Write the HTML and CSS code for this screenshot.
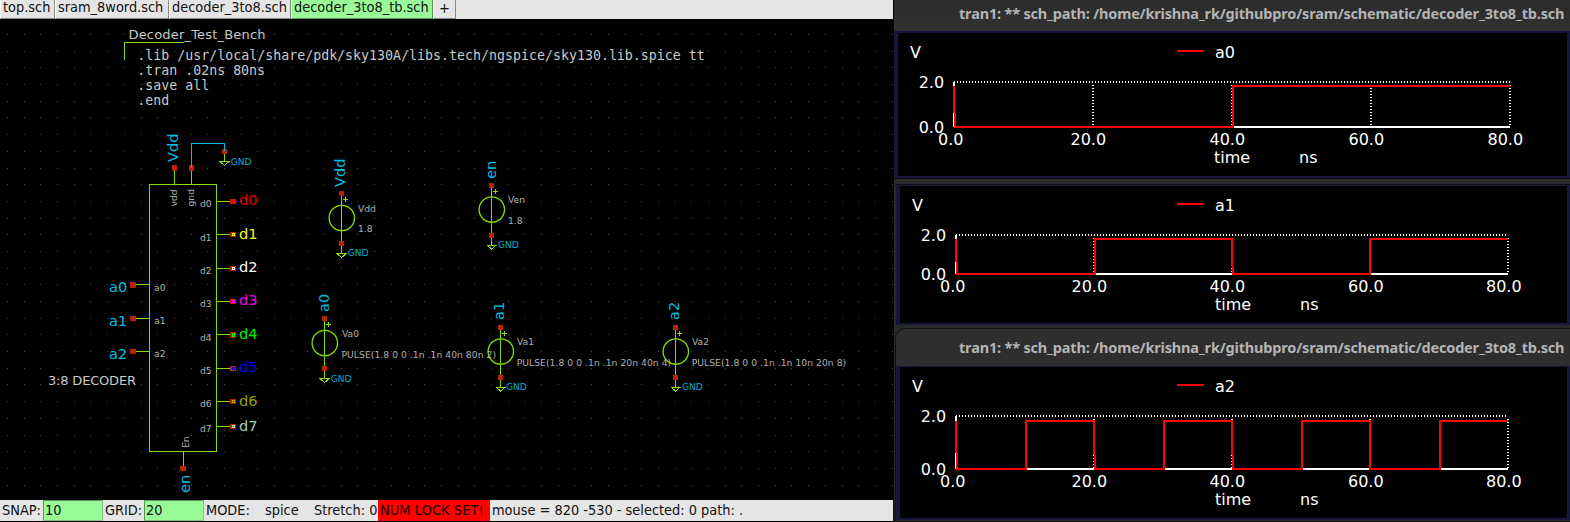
FILE: index.html
```html
<!DOCTYPE html>
<html lang="en">
<head>
<meta charset="utf-8">
<title>decoder_3to8_tb.sch</title>
<link rel="stylesheet" href="styles.css">
</head>
<body>
<div class="desktop">
  <main class="editor">
    <nav class="tabs">
      <div class="tab tab-top">top.sch</div>
      <div class="tab tab-sram">sram_8word.sch</div>
      <div class="tab tab-dec">decoder_3to8.sch</div>
      <div class="tab tab-tb active">decoder_3to8_tb.sch</div>
      <div class="tab tab-add">+</div>
    </nav>
    <svg class="schematic" viewBox="0 19 893 481">
      <defs>
        <g id="source">
          <path class="line" d="M0.5 0V61M4.5 4V9M2 6.5H7"/>
          <circle class="ring" cx="0.8" cy="25" r="12.7"/>
          <path class="line" d="M-4 60.5H5.5L0.5 64.5Z"/>
          <rect class="pin" x="-2" y="-2" width="5" height="5"/>
          <rect class="pin" x="-2" y="48" width="5" height="5"/>
        </g>
      </defs>
      <g id="grid" class="dots"></g>

      <text class="note" x="128.500" y="39" textLength="137">Decoder_Test_Bench</text>
      <path class="line" d="M124.500 60V42.500H184"/>
      <g class="code">
        <text x="137.300" y="60.400" textLength="567.500">.lib /usr/local/share/pdk/sky130A/libs.tech/ngspice/sky130.lib.spice tt</text>
        <text x="137.300" y="75.400">.tran .02ns 80ns</text>
        <text x="137.300" y="90.400">.save all</text>
        <text x="137.300" y="105.400">.end</text>
      </g>

      <!-- decoder symbol -->
      <path class="line" d="M149.500 184.500H216.500V451.500H149.500ZM174.500 168V184M191.500 168V184M183.500 452V468M133 284.500H149M133 318.500H149M133 351.500H149M216 201.500H233M216 234.500H233M216 268.500H233M216 301.500H233M216 334.500H233M216 368.500H233M216 401.500H233M216 426.500H233"/>
      <path class="line" d="M224.500 151V161M220 161.500H229L224.500 165.500Z"/>
      <g class="pin">
        <rect x="172" y="165" width="5" height="6"/><rect x="189" y="165" width="5" height="6"/>
        <rect x="222" y="149" width="5" height="5"/><rect x="180" y="466" width="6" height="5"/>
        <rect x="130" y="282" width="6" height="6"/><rect x="130" y="316" width="6" height="5"/><rect x="130" y="349" width="6" height="5"/>
        <rect x="230" y="199" width="6" height="5"/><rect x="230" y="232" width="6" height="5"/>
        <rect x="230" y="266" width="6" height="5"/><rect x="230" y="299" width="6" height="5"/>
        <rect x="230" y="332" width="6" height="6"/><rect x="230" y="366" width="6" height="5"/>
        <rect x="230" y="399" width="6" height="5"/><rect x="230" y="424" width="6" height="5"/>
      </g>
      <path class="wire" d="M191.500 168V143.500H224.500V151"/>
      <g class="probe">
        <rect class="c0" x="232.500" y="200.500" width="2" height="2"/><rect class="c1" x="232.500" y="233.500" width="2" height="2"/>
        <rect class="c2" x="232.500" y="267.500" width="2" height="2"/><rect class="c3" x="232.500" y="300.500" width="2" height="2"/>
        <rect class="c4" x="232.500" y="333.500" width="2" height="3"/><rect class="c5" x="232.500" y="367.500" width="2" height="2"/>
        <rect class="c6" x="232.500" y="400.500" width="2" height="2"/><rect class="c7" x="232.500" y="425.500" width="2" height="2"/>
      </g>
      <g class="outs">
        <text class="t0" x="239" y="205">d0</text><text class="t1" x="239" y="239">d1</text>
        <text class="t2" x="239" y="272">d2</text><text class="t3" x="239" y="305">d3</text>
        <text class="t4" x="239" y="339">d4</text><text class="t5" x="239" y="372">d5</text>
        <text class="t6" x="239" y="406">d6</text><text class="t7" x="239" y="431">d7</text>
      </g>
      <g class="net">
        <text x="109" y="291.500">a0</text><text x="109" y="326">a1</text><text x="109" y="359">a2</text>
        <text transform="translate(178.300 162) rotate(-90)">Vdd</text>
        <text transform="translate(190 493) rotate(-90)">en</text>
      </g>
      <g class="small">
        <text x="200" y="207">d0</text><text x="200" y="241">d1</text><text x="200" y="274">d2</text><text x="200" y="307">d3</text>
        <text x="200" y="340.500">d4</text><text x="200" y="374">d5</text><text x="200" y="407">d6</text><text x="200" y="432">d7</text>
        <text x="154" y="291">a0</text><text x="154" y="324">a1</text><text x="154" y="357">a2</text>
        <text transform="translate(177 206.500) rotate(-90)">vdd</text>
        <text transform="translate(193.500 206.500) rotate(-90)">gnd</text>
        <text transform="translate(189 448) rotate(-90)">En</text>
      </g>
      <text class="note" x="48" y="384.500" textLength="88">3:8 DECODER</text>

      <!-- voltage sources -->
      <use href="#source" x="341" y="193"/>
      <use href="#source" x="491" y="184.500"/>
      <use href="#source" x="324" y="318"/>
      <use href="#source" x="500" y="326.500"/>
      <use href="#source" x="675" y="326.500"/>
      <g class="net">
        <text transform="translate(345 187) rotate(-90)">Vdd</text>
        <text transform="translate(496 179) rotate(-90)">en</text>
        <text transform="translate(329 312) rotate(-90)">a0</text>
        <text transform="translate(504 320) rotate(-90)">a1</text>
        <text transform="translate(679 320) rotate(-90)">a2</text>
      </g>
      <g class="gnd">
        <text x="230.700" y="165">GND</text><text x="347.700" y="256">GND</text><text x="498" y="248">GND</text>
        <text x="330.700" y="382">GND</text><text x="506" y="390">GND</text><text x="682" y="390">GND</text>
      </g>
      <g class="small">
        <text x="358" y="212">Vdd</text><text x="358" y="232">1.8</text>
        <text x="508" y="203">Ven</text><text x="508" y="224">1.8</text>
        <text x="342" y="337">Va0</text><text x="341.500" y="358" textLength="154.500">PULSE(1.8 0 0 .1n .1n 40n 80n 2)</text>
        <text x="517" y="345">Va1</text><text x="516.700" y="366" textLength="154.500">PULSE(1.8 0 0 .1n .1n 20n 40n 4)</text>
        <text x="692" y="345">Va2</text><text x="691.700" y="366" textLength="154.500">PULSE(1.8 0 0 .1n .1n 10n 20n 8)</text>
      </g>
    </svg>
    <footer class="status">
      <span class="cell snap">SNAP:</span><span class="cell field">10</span>
      <span class="cell grid">GRID:</span><span class="cell field">20</span>
      <span class="cell mode">MODE:</span><span class="cell sim">spice</span>
      <span class="cell stretch">Stretch: 0</span><span class="cell alert">NUM LOCK SET!</span>
      <span class="cell mouse">mouse = 820 -530 - selected: 0 path: .</span>
    </footer>
  </main>

  <aside class="plots">
    <section class="window w0">
      <svg class="title" viewBox="894 0 676 31"><text x="959" y="19" textLength="605.500">tran1: ** sch_path: /home/krishna_rk/githubpro/sram/schematic/decoder_3to8_tb.sch</text></svg>
      <div class="frame">
        <svg class="plot" viewBox="898 33 669 143">
          <path class="axis" d="M954 82V127M954 127H1510"/>
          <path class="tick" d="M954 82H1510M1093 85V127M1232 85V127M1371 85V127M1510 85V127"/>
          <path class="trace" d="M1177 51H1204M954 86V113M955 113V127H1233V86H1510"/>
          <text x="910" y="58">V</text><text x="1215" y="58">a0</text>
          <text x="918.700" y="88">2.0</text><text x="918.700" y="133">0.0</text>
          <text x="938" y="145">0.0</text><text x="1070.500" y="145">20.0</text><text x="1209.500" y="145">40.0</text><text x="1348.500" y="145">60.0</text><text x="1487.500" y="145">80.0</text>
          <text x="1214" y="163">time</text><text x="1299" y="163">ns</text>
        </svg>
      </div>
    </section>
    <section class="window w1">
      <div class="frame">
        <svg class="plot" viewBox="900 186 667 137">
          <path class="axis" d="M956 235V274M956 274H1508"/>
          <path class="tick" d="M956 235H1508M1094 238V274M1232 238V274M1370 238V274M1508 238V274"/>
          <path class="trace" d="M1177 204H1204M956 239V262M957 262V274H1095V239H1232V266M1233 266V274H1370V239H1508"/>
          <text x="912" y="211">V</text><text x="1215" y="211">a1</text>
          <text x="920.700" y="241">2.0</text><text x="920.700" y="280">0.0</text>
          <text x="940" y="292">0.0</text><text x="1071.500" y="292">20.0</text><text x="1209.500" y="292">40.0</text><text x="1348" y="292">60.0</text><text x="1486" y="292">80.0</text>
          <text x="1215" y="310">time</text><text x="1300" y="310">ns</text>
        </svg>
      </div>
    </section>
    <section class="window w2">
      <svg class="title" viewBox="896 329 674 37"><text x="959" y="353" textLength="605.500">tran1: ** sch_path: /home/krishna_rk/githubpro/sram/schematic/decoder_3to8_tb.sch</text></svg>
      <div class="frame">
        <svg class="plot" viewBox="900 367 667 151">
          <path class="axis" d="M956 416V469M956 469H1508"/>
          <path class="tick" d="M956 416H1508M1094 419V469M1232 419V469M1370 419V469M1508 419V469"/>
          <path class="trace" d="M1177 385H1204M956 421V453M957 453V469H1026V421H1094V455M1095 455V469H1164V421H1232V455M1233 455V469H1302V421H1370V469H1440V421H1508"/>
          <text x="912" y="392">V</text><text x="1215" y="392">a2</text>
          <text x="920.700" y="422">2.0</text><text x="920.700" y="475">0.0</text>
          <text x="940" y="487">0.0</text><text x="1071.500" y="487">20.0</text><text x="1209.500" y="487">40.0</text><text x="1348" y="487">60.0</text><text x="1486" y="487">80.0</text>
          <text x="1215" y="505">time</text><text x="1300" y="505">ns</text>
        </svg>
      </div>
    </section>
  </aside>
</div>
<script src="grid.js"></script>
</body>
</html>
```
FILE: grid.js
```js
// Draws the snap-grid dots of the schematic canvas.
var step = 16.69;
var d = '';
for (var j = 0; j < 28; j++) {
  for (var i = 0; i < 54; i++) {
    d += 'M' + Math.round(7 + i * step) + ' ' + Math.round(34 + j * step) + 'h1v1h-1z';
  }
}
var dots = document.createElementNS('http://www.w3.org/2000/svg', 'path');
dots.setAttribute('d', d);
document.getElementById('grid').appendChild(dots);
```
FILE: styles.css
```css
* { box-sizing: border-box; }
body { margin: 0; background: #000; overflow: hidden; font-family: "DejaVu Sans", sans-serif; }
.desktop { display: flex; width: 1570px; height: 522px; background: #000; }
svg { display: block; }
svg text { white-space: pre; }

.editor { display: flex; flex-direction: column; width: 893px; height: 521px; }
.tabs, .status {
  display: flex;
  flex: none;
  background: #e5e5e5;
  color: #111;
  font-family: "DejaVu Sans Condensed", "DejaVu Sans", sans-serif;
  font-stretch: condensed;
  font-size: 14.4px;
  white-space: nowrap;
}
.tabs { height: 19px; }
.tab {
  height: 19px;
  padding-left: 2px;
  line-height: 15px;
  border-left: 1px solid #fff;
  border-right: 1px solid #888;
  border-bottom: 1px solid #888;
}
.tab-top { width: 55px; }
.tab-sram { width: 114px; }
.tab-dec { width: 122px; }
.tab-tb { width: 142px; }
.tab-add { width: 23px; padding-left: 5px; line-height: 17px; }
.tab.active { background: #98fb98; border-color: #5b975b; border-left-color: #c8ffc8; }

.schematic { width: 893px; height: 481px; flex: none; }
.dots { fill: #505050; shape-rendering: crispEdges; }
.line { fill: none; stroke: #88dd00; stroke-width: 1; shape-rendering: crispEdges; }
.ring { fill: none; stroke: #88dd00; stroke-width: 1.3; }
.wire { fill: none; stroke: #00bbdd; stroke-width: 1; shape-rendering: crispEdges; }
.pin { fill: #bb2200; shape-rendering: crispEdges; }
.note { fill: #c8c8c8; font-size: 13px; }
.code { fill: #c8c8c8; font-family: "DejaVu Sans Mono", monospace; font-size: 13.28px; }
.net { fill: #00bfe2; font-size: 14.6px; }
.outs { font-size: 14.6px; }
.small { fill: #b0b0b0; font-size: 9.2px; }
.gnd { fill: #00aecf; font-size: 9.1px; }
.probe { fill: none; stroke-width: 1; shape-rendering: crispEdges; }
.probe .c0 { stroke: #f00; fill: #f00; }
.c1 { stroke: #ff0; }
.c2 { stroke: #fff; }
.c3 { stroke: #f0f; }
.c4 { stroke: #0f0; }
.c5 { stroke: #00f; }
.c6 { stroke: #aaaa00; }
.c7 { stroke: #bbddbb; }
.t0 { fill: #e60000; }
.t1 { fill: #f8f800; }
.t2 { fill: #fafafa; }
.t3 { fill: #f000f0; }
.t4 { fill: #00f000; }
.t5 { fill: #0000ee; }
.t6 { fill: #999900; }
.t7 { fill: #a8cca8; }

.status { height: 21px; line-height: 20px; }
.cell { height: 21px; flex: none; }
.snap { width: 43px; padding-left: 2px; }
.field { width: 60px; padding-left: 1px; background: #98fb98; border: 1px solid #7cc77c; border-top-color: #5b975b; border-left-color: #5b975b; line-height: 18px; }
.grid { width: 41px; padding-left: 2px; }
.mode { width: 60px; padding-left: 2px; }
.sim { width: 50px; padding-left: 1px; }
.stretch { width: 64px; }
.alert { width: 112px; padding-left: 2px; background: #f00; color: #200; letter-spacing: 0.1px; }
.mouse { padding-left: 2px; }

.plots {
  display: flex;
  flex-direction: column;
  width: 676px;
  height: 522px;
  margin-left: 1px;
  background: #2a2a2a;
}
.window { flex: none; border-bottom: 1px solid #0c0c0c; }
.title { width: 100%; }
.title text { fill: #b4b4b4; font: bold 14.5px "Noto Sans", "Open Sans", sans-serif; }
.frame { border: solid #16163f; background: #000; }
.plot { width: 100%; height: 100%; }
.plot text { fill: #fff; font-size: 16px; }
.w0 { height: 179px; background: linear-gradient(#2b2b2b, #303030 24px, #2c2c2c); }
.w0 .title { height: 31px; }
.w0 .frame { height: 147px; border-width: 2px 3px 2px 4px; }
.w1 { height: 141px; margin: 5px 0 0 2px; border-top: 1px solid #111; }
.w1 .frame { height: 140px; border-width: 1px 3px 2px 4px; }
.w2 { height: 194px; margin: 3px 0 0 1px; border: 1px solid #101010; border-right: 0; border-radius: 10px 0 0 0; background: #2e2e2e; }
.w2 .title { height: 37px; }
.w2 .frame { height: 154px; border-width: 1px 3px 2px 4px; }
.axis { fill: none; stroke: #fff; stroke-width: 2; shape-rendering: crispEdges; }
.tick { fill: none; stroke: #fff; stroke-width: 2; stroke-dasharray: 1 2; shape-rendering: crispEdges; }
.trace { fill: none; stroke: #f00; stroke-width: 2; shape-rendering: crispEdges; }
```
